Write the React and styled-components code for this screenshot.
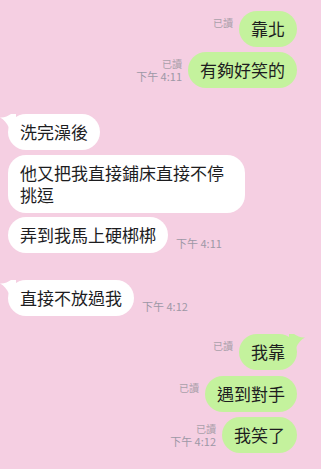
import React from 'react';
import styled, { createGlobalStyle } from 'styled-components';

const Global = createGlobalStyle`
  html, body {
    margin: 0;
    padding: 0;
    background: #f5cfe2;
  }
  body {
    font-family: "Noto Sans CJK TC", "Noto Sans", sans-serif;
  }
`;

const Chat = styled.div`
  width: 321px;
  height: 469px;
  box-sizing: border-box;
  padding: 11px 24px 0 8px;
  background: #f5cfe2;
  display: flex;
  flex-direction: column;
  overflow: hidden;
`;

const Row = styled.div`
  display: flex;
  justify-content: ${p => (p.$mine ? 'flex-end' : 'flex-start')};
  align-items: ${p => (p.$mine ? 'center' : 'flex-end')};
  gap: ${p => (p.$mine ? '6px' : '8px')};
  margin-top: ${p => p.$mt || 0}px;
`;

const Bubble = styled.div`
  position: relative;
  max-width: 213px;
  padding: 7px 12px;
  border-radius: 18px;
  background: ${p => (p.$mine ? '#c4f29d' : '#ffffff')};
  color: #1d1d1f;
  font-size: 17px;
  line-height: 22px;
  word-break: break-all;
`;

const Meta = styled.div`
  display: flex;
  flex-direction: column;
  align-items: ${p => (p.$mine ? 'flex-end' : 'flex-start')};
  min-height: ${p => (p.$mine ? '26px' : '0')};
  margin-bottom: ${p => (p.$mine ? '0' : '3px')};
`;

const Read = styled.span`
  display: block;
  font-size: 10px;
  line-height: 13px;
  color: #aaa0aa;
`;

const Time = styled.span`
  display: block;
  font-size: 11px;
  line-height: 13px;
  color: #9d98a6;
  white-space: nowrap;
`;

const Tail = styled.svg`
  position: absolute;
  top: 0;
  width: 16px;
  height: 14px;
  ${p => (p.$mine ? 'right: -8px; transform: scaleX(-1);' : 'left: -8px;')}
`;

const TailShape = ({ mine }) => (
  <Tail $mine={mine} viewBox="0 0 16 14">
    <path
      d="M0 3.5 C4 4, 8 2, 11 0 L16 0 L16 14 L9 14 C7 9, 4 5.5, 0 3.5 Z"
      fill={mine ? '#c4f29d' : '#ffffff'}
    />
  </Tail>
);

const Mine = ({ text, time, tail, mt }) => (
  <Row $mine $mt={mt}>
    <Meta $mine>
      <Read>已讀</Read>
      {time && <Time>{time}</Time>}
    </Meta>
    <Bubble $mine>
      {tail && <TailShape mine />}
      {text}
    </Bubble>
  </Row>
);

const Theirs = ({ text, time, tail, mt }) => (
  <Row $mt={mt}>
    <Bubble>
      {tail && <TailShape />}
      {text}
    </Bubble>
    {time && (
      <Meta>
        <Time>{time}</Time>
      </Meta>
    )}
  </Row>
);

export default function App() {
  return (
    <Chat>
      <Global />
      <Mine text="靠北" />
      <Mine text="有夠好笑的" time="下午 4:11" mt={5} />
      <Theirs text="洗完澡後" tail mt={26} />
      <Theirs text="他又把我直接鋪床直接不停挑逗" mt={5} />
      <Theirs text="弄到我馬上硬梆梆" time="下午 4:11" mt={4} />
      <Theirs text="直接不放過我" time="下午 4:12" tail mt={27} />
      <Mine text="我靠" tail mt={18} />
      <Mine text="遇到對手" mt={6} />
      <Mine text="我笑了" time="下午 4:12" mt={5} />
    </Chat>
  );
}
